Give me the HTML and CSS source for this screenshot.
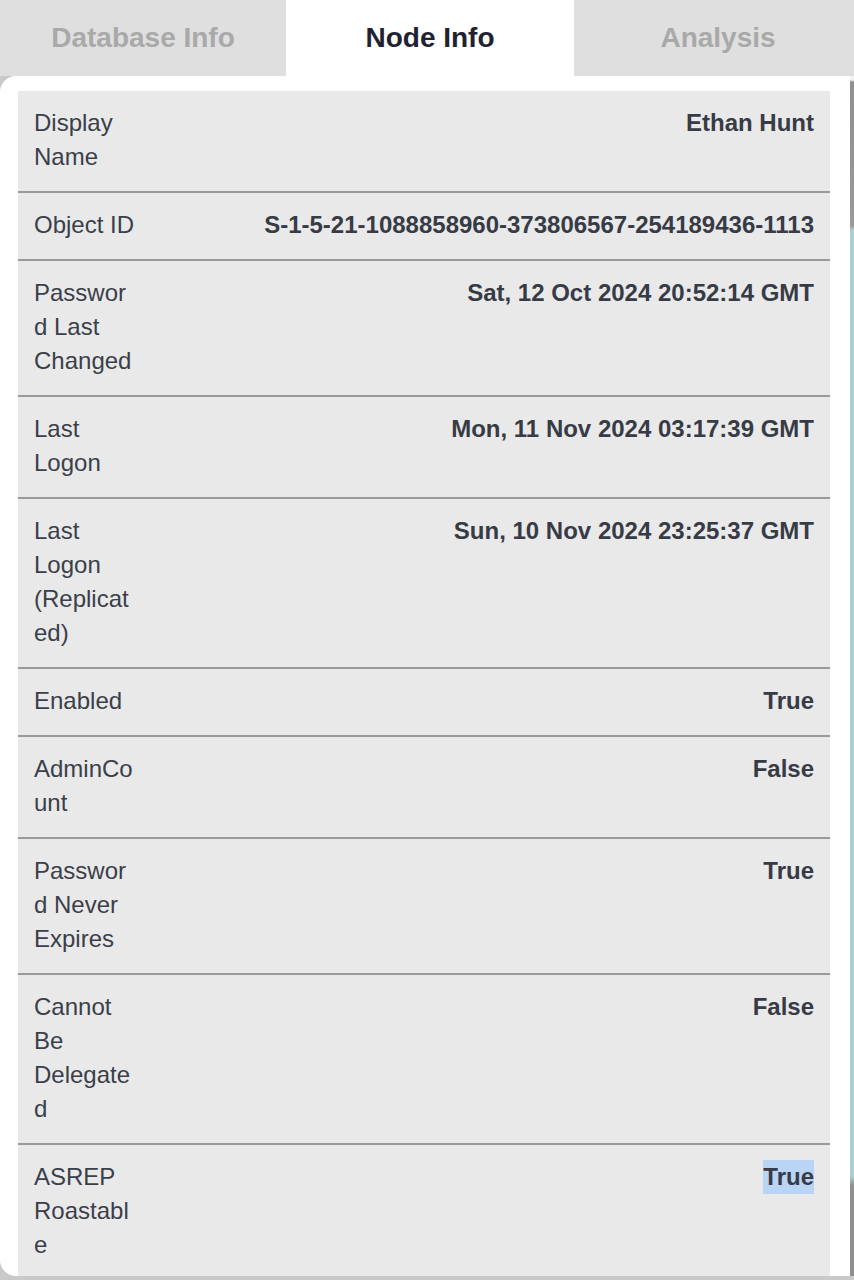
FILE: index.html
```html
<!DOCTYPE html>
<html>
<head>
<meta charset="utf-8">
<link rel="stylesheet" href="styles.css">
</head>
<body>
<div class="tabs">
  <div class="tab">Database Info</div>
  <div class="tab active">Node Info</div>
  <div class="tab">Analysis</div>
</div>
<div class="main">
  <div class="panel">
    <div class="table">
      <div class="row"><div class="label">Display Name</div><div class="value">Ethan Hunt</div></div>
      <div class="row"><div class="label">Object ID</div><div class="value">S-1-5-21-1088858960-373806567-254189436-1113</div></div>
      <div class="row"><div class="label">Password Last Changed</div><div class="value">Sat, 12 Oct 2024 20:52:14 GMT</div></div>
      <div class="row"><div class="label">Last Logon</div><div class="value">Mon, 11 Nov 2024 03:17:39 GMT</div></div>
      <div class="row"><div class="label">Last Logon (Replicated)</div><div class="value">Sun, 10 Nov 2024 23:25:37 GMT</div></div>
      <div class="row"><div class="label">Enabled</div><div class="value">True</div></div>
      <div class="row"><div class="label">AdminCount</div><div class="value">False</div></div>
      <div class="row"><div class="label">Password Never Expires</div><div class="value">True</div></div>
      <div class="row"><div class="label">Cannot Be Delegated</div><div class="value">False</div></div>
      <div class="row"><div class="label">ASREP Roastable</div><div class="value"><span class="sel">True</span></div></div>
    </div>
  </div>
  <div class="edge"></div>
</div>
</body>
</html>
```
FILE: styles.css
```css
html, body {
  margin: 0;
  padding: 0;
}
body {
  width: 854px;
  height: 1280px;
  overflow: hidden;
  background: #c9c9c9;
  font-family: "Liberation Sans", Arial, sans-serif;
}
.tabs {
  display: grid;
  grid-template-columns: 286px 288px 288px;
  height: 76px;
  background: #dfdfdf;
}
.tab {
  display: flex;
  align-items: center;
  justify-content: center;
  font-size: 28px;
  font-weight: bold;
  color: #a9a9a9;
}
.tab.active {
  background: #ffffff;
  color: #1f2230;
}
.main {
  display: flex;
  height: 1200px;
}
.panel {
  width: 850px;
  flex: none;
  box-sizing: border-box;
  background: #ffffff;
  border-radius: 16px 0 0 16px;
  padding: 15px 20px 0 18px;
  overflow: hidden;
}
.edge {
  width: 4px;
  flex: none;
  background: linear-gradient(to bottom, #f2f2f2 0, #f2f2f2 4px, #8f8f8f 6px, #9a9a9a 150px, #a9d0d4 154px, #a9d0d4 1100px, #8f8f8f 1110px);
}
.table {
  background: #e9e9e9;
}
.row {
  display: flex;
  justify-content: space-between;
  gap: 12px;
  padding: 15px 16px 17px;
  border-bottom: 2px solid #9a9a9a;
  font-size: 24px;
  line-height: 34px;
  color: #3b3f49;
}
.row:last-child {
  border-bottom: none;
}
.label {
  width: 102px;
  flex: none;
  overflow-wrap: anywhere;
}
.value {
  font-weight: bold;
  text-align: right;
  color: #373b46;
}
.sel {
  display: inline-block;
  background: #b9d4f4;
}
```
